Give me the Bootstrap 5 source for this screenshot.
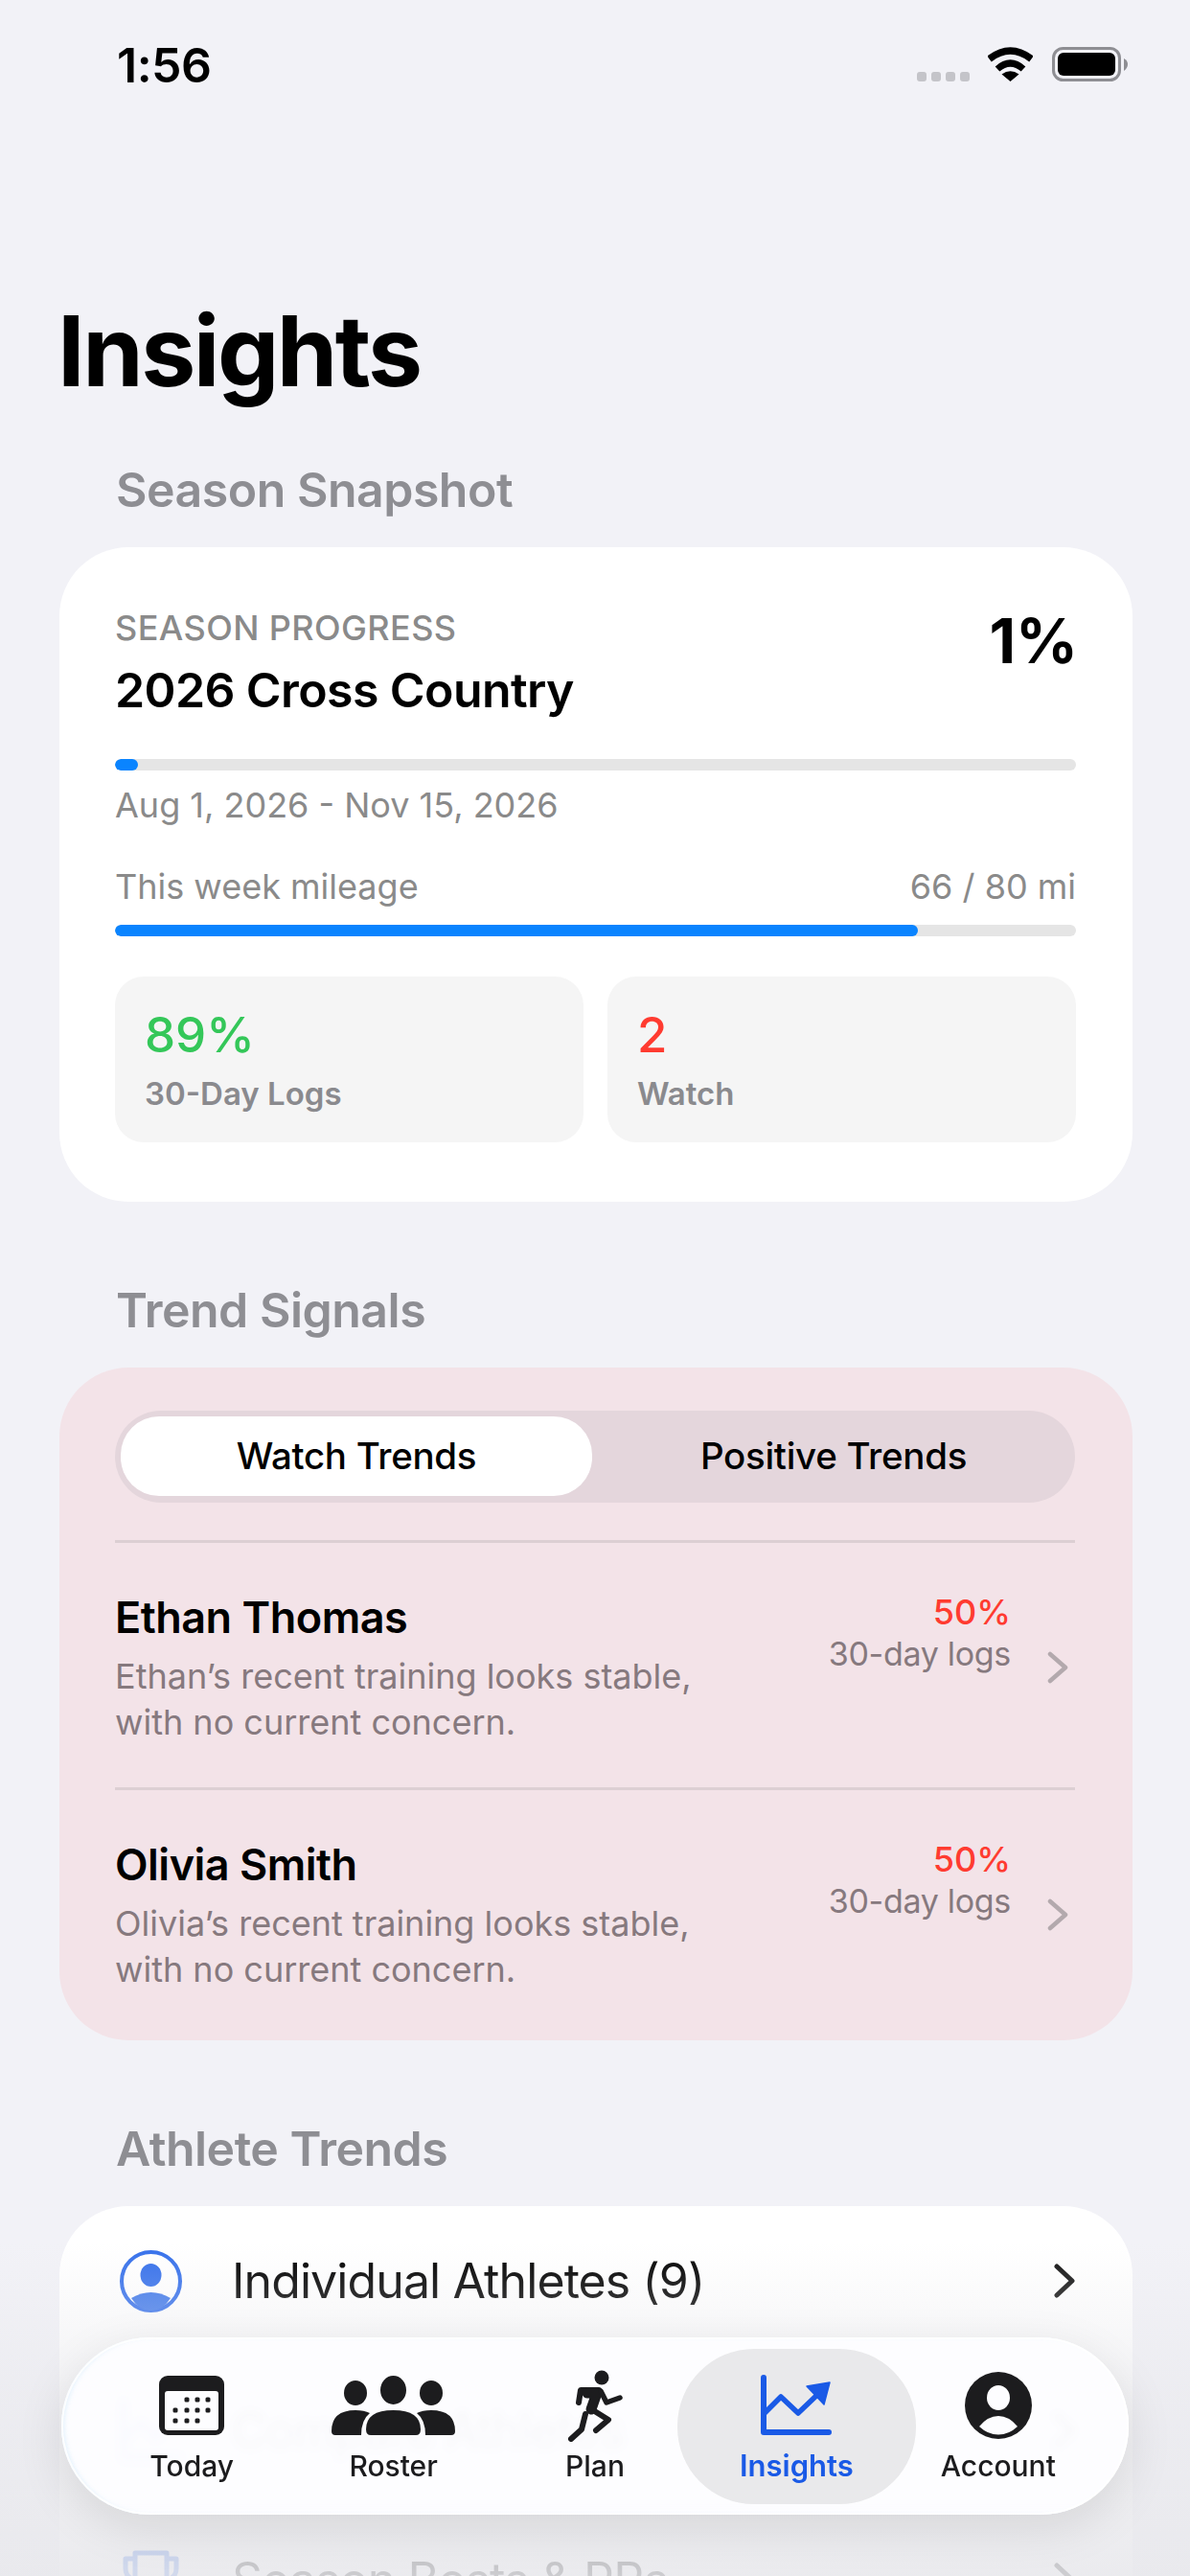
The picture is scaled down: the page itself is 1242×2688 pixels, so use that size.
<!DOCTYPE html>
<html lang="en">
  <head>
    <meta charset="UTF-8" />
    <meta name="viewport" content="width=device-width, initial-scale=1.0" />
    <title>Insights</title>
    <link
      href="https://cdn.jsdelivr.net/npm/bootstrap@5.3.0/dist/css/bootstrap.min.css"
      rel="stylesheet"
    />
    <style>
      html, body { height: 2688px; overflow: hidden; }
      body {
        background: #f2f2f7;
        font-family: Inter, "Liberation Sans", sans-serif;
        color: #000;
        position: relative;
      }
      .status-row { height: 100px; padding: 36px 64px 0 122px; }
      .status-time { font-size: 50px; line-height: 64px; font-weight: 600; letter-spacing: -.5px; }
      .status-icons { padding-top: 13px; }
      .signal-dots { gap: 5px; margin: 26px 19px 0 0; }
      .signal-dots i { display: block; width: 10px; height: 10px; border-radius: 3px; background: #c4c4c9; }
      .wifi-icon { margin-right: 20px; }
      .page-title { font-size: 102px; line-height: 120px; font-weight: 700; letter-spacing: -2.5px; margin: 206px 0 55px 60px; }
      .section-title { font-size: 50px; line-height: 60px; font-weight: 600; color: #8e8e93; margin: 0 0 30px 121px; letter-spacing: -.5px; }
      .sheet { margin: 0 60px 0 62px; border: 0; border-radius: 72px; background: #fff; }
      .sheet-season { padding: 62px 59px 62px 58px; margin-bottom: 83px; }
      .eyebrow { font-size: 36px; line-height: 44px; font-weight: 500; color: #8a8a8a; letter-spacing: .4px; }
      .season-name { font-size: 50px; line-height: 60px; font-weight: 600; margin-top: 13px; letter-spacing: -.6px; }
      .season-pct { font-size: 64px; line-height: 72px; font-weight: 700; margin-right: -2px; }
      .progress.thin-bar { height: 12px; background: #e5e5e5; border-radius: 6px; }
      .thin-bar .progress-bar { background: #0a84ff; border-radius: 6px; }
      .season-bar { margin-top: 42px; }
      .muted-line { font-size: 36px; line-height: 48px; color: #8a8a8a; }
      .date-line { margin-top: 12px; }
      .week-line { margin-top: 37px; }
      .week-bar { margin-top: 16px; }
      .tile-row { gap: 25px; margin-top: 42px; }
      .stat-tile { flex: 1 1 0; height: 173px; background: #f5f5f5; border-radius: 30px; padding: 31px 31px 0; }
      .stat-value { font-size: 51px; line-height: 60px; font-weight: 500; }
      .stat-label { font-size: 33px; line-height: 44px; font-weight: 600; color: #8a8a8e; margin-top: 9px; }
      .text-good { color: #34c759; }
      .text-bad { color: #ff3b30; }

      .sheet-trends { background: #f3e3e8; padding-top: 45px; margin-bottom: 83px; height: 702px; }
      .seg-track { margin: 0 60px 0 58px; height: 96px; padding: 6px 6px 7px; background: #e4d6dc; border-radius: 48px; }
      .seg-track .nav-item:first-child { padding-right: 6px; }
      .seg-track .nav-link { height: 83px; line-height: 83px; padding: 0; font-size: 38.5px; font-weight: 500; color: #000; border-radius: 40px; letter-spacing: -.3px; }
      .seg-track .nav-link.active { background: #fff; color: #000; }
      .trend-list { margin-top: 40px; border-top: 1px solid #f7ebee; }
      .trend-list .list-group-item { background: transparent; border: 0; padding: 0 60px 0 58px; color: #000; }
      .trend-row { height: 259px; border-top: 3px solid #dccfd3; margin-top: -1px; padding: 50px 7px 0 0; }
      .trend-name { font-size: 45px; line-height: 56px; font-weight: 600; letter-spacing: -.5px; }
      .trend-note { font-size: 36px; line-height: 48px; color: #86797e; margin-top: 9px; }
      .trend-num { font-size: 36px; line-height: 44px; font-weight: 500; }
      .trend-sub { font-size: 34px; line-height: 44px; color: #86797e; letter-spacing: -.3px; }
      .trend-chev { width: 22px; height: 34px; margin: 63px 0 0 38px; flex: none; }

      .sheet-links { padding: 0 60px 0 63px; }
      .link-row { height: 156px; gap: 52px; font-size: 50px; color: #000; letter-spacing: -.9px; }
      .lead-icon { width: 65px; height: 65px; flex: none; }
      .row-chev { width: 22px; height: 36px; margin-left: auto; flex: none; }

      .bottom-fade {
        position: absolute; left: 0; right: 0; bottom: 0; height: 348px;
        background: linear-gradient(to bottom, rgba(232,232,236,0), rgba(232,232,236,.55) 45%, rgba(232,232,236,.88) 100%);
      }
      .tab-glass {
        position: absolute; left: 64px; top: 2439px; width: 1114px; height: 185px;
        border-radius: 92px; padding: 12px 31px;
        background: rgba(253,253,255,.95);
        -webkit-backdrop-filter: blur(4px);
        backdrop-filter: blur(4px);
        box-shadow: 0 14px 50px rgba(0,0,0,.1), inset 0 0 0 2px rgba(255,255,255,.9), inset 4px 0 5px -1px rgba(205,232,250,.6);
      }
      .tab-glass .nav-link {
        flex: 1 1 0; height: 162px; padding: 0; color: #1c1c1e;
        font-size: 30px; line-height: 40px; font-weight: 500;
        position: relative; text-align: center;
      }
      .tab-glass .nav-link.active { color: #1a5ae6; font-size: 31px; font-weight: 600; }
      .tab-glass .nav-link.active::before {
        content: ""; position: absolute; top: 0; bottom: 0; left: -19px; right: -19px;
        background: #e9e9eb; border-radius: 80px; z-index: -1;
      }
      .tab-art { height: 96px; display: flex; align-items: center; justify-content: center; padding-top: 22px; }
      .tab-word { display: block; margin-top: 6px; }
    </style>
  </head>
  <body>
    <!-- Status bar -->
    <div class="status-row d-flex justify-content-between align-items-start">
      <div class="status-time">1:56</div>
      <div class="status-icons d-flex align-items-start">
        <div class="signal-dots d-flex"><i></i><i></i><i></i><i></i></div>
        <svg class="wifi-icon" width="47" height="36" viewBox="0 0 47 36" aria-hidden="true">
          <path d="M1.5 12.5Q23.500 -4.500 45.500 12.500" fill="none" stroke="#000" stroke-width="7.5" />
          <path d="M10 23Q23.500 11 37 23" fill="none" stroke="#000" stroke-width="7" />
          <path d="M23.5 36L14.5 28.5Q23.5 22 32.5 28.5Z" />
        </svg>
        <svg width="80" height="36" viewBox="0 0 80 36" aria-hidden="true">
          <rect x="1.5" y="1.5" width="69" height="33" rx="10" fill="none" stroke="#8e8e93" stroke-width="3" />
          <rect x="6" y="6" width="60" height="24" rx="6" />
          <path d="M75 12Q79 14 79 18Q79 22 75 25Z" fill="#8e8e93" />
        </svg>
      </div>
    </div>

    <h1 class="page-title">Insights</h1>

    <!-- Season -->
    <h2 class="section-title">Season Snapshot</h2>
    <div class="card sheet sheet-season">
      <div class="d-flex justify-content-between align-items-start">
        <div>
          <div class="eyebrow">SEASON PROGRESS</div>
          <div class="season-name">2026 Cross Country</div>
        </div>
        <div class="season-pct">1%</div>
      </div>
      <div class="progress thin-bar season-bar">
        <div class="progress-bar" style="width: 2.4%"></div>
      </div>
      <div class="muted-line date-line">Aug 1, 2026 - Nov 15, 2026</div>
      <div class="d-flex justify-content-between muted-line week-line">
        <span>This week mileage</span><span>66 / 80 mi</span>
      </div>
      <div class="progress thin-bar week-bar">
        <div class="progress-bar" style="width: 83.5%"></div>
      </div>
      <div class="d-flex tile-row">
        <div class="stat-tile">
          <div class="stat-value text-good">89%</div>
          <div class="stat-label">30-Day Logs</div>
        </div>
        <div class="stat-tile">
          <div class="stat-value text-bad">2</div>
          <div class="stat-label">Watch</div>
        </div>
      </div>
    </div>

    <!-- Trends -->
    <h2 class="section-title">Trend Signals</h2>
    <div class="card sheet sheet-trends">
      <ul class="nav nav-pills nav-justified seg-track">
        <li class="nav-item"><a class="nav-link active" href="#">Watch Trends</a></li>
        <li class="nav-item"><a class="nav-link" href="#">Positive Trends</a></li>
      </ul>
      <div class="list-group list-group-flush trend-list">
        <div class="list-group-item">
          <div class="trend-row d-flex">
            <div class="flex-grow-1">
              <div class="trend-name">Ethan Thomas</div>
              <div class="trend-note">Ethan’s recent training looks stable,<br />with no current concern.</div>
            </div>
            <div class="text-end">
              <div class="trend-num text-bad">50%</div>
              <div class="trend-sub">30-day logs</div>
            </div>
            <svg class="trend-chev" viewBox="0 0 22 34" aria-hidden="true"><path d="M3 3L19 17L3 31" fill="none" stroke="#b3a9ad" stroke-width="4.5" stroke-linecap="round" stroke-linejoin="round" /></svg>
          </div>
        </div>
        <div class="list-group-item">
          <div class="trend-row d-flex">
            <div class="flex-grow-1">
              <div class="trend-name">Olivia Smith</div>
              <div class="trend-note">Olivia’s recent training looks stable,<br />with no current concern.</div>
            </div>
            <div class="text-end">
              <div class="trend-num text-bad">50%</div>
              <div class="trend-sub">30-day logs</div>
            </div>
            <svg class="trend-chev" viewBox="0 0 22 34" aria-hidden="true"><path d="M3 3L19 17L3 31" fill="none" stroke="#b3a9ad" stroke-width="4.5" stroke-linecap="round" stroke-linejoin="round" /></svg>
          </div>
        </div>
      </div>
    </div>

    <!-- Athlete links, these run under the tab bar -->
    <h2 class="section-title">Athlete Trends</h2>
    <div class="card sheet sheet-links">
      <div class="link-row d-flex align-items-center">
        <svg class="lead-icon" viewBox="0 0 65 65" aria-hidden="true">
          <circle cx="32.5" cy="32.5" r="30.5" fill="none" stroke="#3570eb" stroke-width="4" />
          <ellipse cx="32.5" cy="26" rx="11" ry="12" fill="#3570eb" />
          <path d="M12 50Q22 44 32.5 44Q43 44 53 50Q45 63 32.5 63Q20 63 12 50Z" fill="#4079ea" />
        </svg>
        <span>Individual Athletes (9)</span>
        <svg class="row-chev" viewBox="0 0 22 36" aria-hidden="true"><path d="M3 3L19 18L3 33" fill="none" stroke="#111" stroke-width="5" stroke-linecap="round" stroke-linejoin="round" /></svg>
      </div>
      <div class="link-row d-flex align-items-center">
        <svg class="lead-icon" viewBox="0 0 65 65" aria-hidden="true">
          <path d="M4 2V60H62M4 42L22 24L38 40L58 16" fill="none" stroke="#3570eb" stroke-width="5" stroke-linecap="round" stroke-linejoin="round" />
        </svg>
        <span>Compare Athletes</span>
        <svg class="row-chev" viewBox="0 0 22 36" aria-hidden="true"><path d="M3 3L19 18L3 33" fill="none" stroke="#111" stroke-width="5" stroke-linecap="round" stroke-linejoin="round" /></svg>
      </div>
      <div class="link-row d-flex align-items-center">
        <svg class="lead-icon" viewBox="0 0 65 65" aria-hidden="true">
          <path d="M16 4H49V28Q49 44 32.5 44Q16 44 16 28ZM16 10H6V20Q6 30 16 32M49 10H59V20Q59 30 49 32M32.5 44V56M20 60H45" fill="none" stroke="#3570eb" stroke-width="5" stroke-linecap="round" stroke-linejoin="round" />
        </svg>
        <span>Season Bests &amp; PRs</span>
        <svg class="row-chev" viewBox="0 0 22 36" aria-hidden="true"><path d="M3 3L19 18L3 33" fill="none" stroke="#111" stroke-width="5" stroke-linecap="round" stroke-linejoin="round" /></svg>
      </div>
    </div>

    <div class="bottom-fade"></div>

    <!-- Tab bar -->
    <nav class="nav tab-glass">
      <a class="nav-link" href="#">
        <span class="tab-art">
          <svg width="68" height="62" viewBox="0 0 68 62" aria-hidden="true">
            <rect width="68" height="62" rx="9" fill="#1c1c1e" />
            <rect x="6" y="16" width="56" height="41" rx="3" fill="#fdfdff" />
            <g fill="#1c1c1e">
              <rect x="26.5" y="22.5" width="5" height="5" rx="1.5" /><rect x="37.5" y="22.5" width="5" height="5" rx="1.5" /><rect x="48.5" y="22.5" width="5" height="5" rx="1.5" />
              <rect x="14.5" y="33.5" width="5" height="5" rx="1.5" /><rect x="26.5" y="33.5" width="5" height="5" rx="1.5" /><rect x="37.5" y="33.5" width="5" height="5" rx="1.5" /><rect x="48.5" y="33.5" width="5" height="5" rx="1.5" />
              <rect x="14.5" y="44.5" width="5" height="5" rx="1.5" /><rect x="26.5" y="44.5" width="5" height="5" rx="1.5" /><rect x="37.5" y="44.5" width="5" height="5" rx="1.5" />
            </g>
          </svg>
        </span>
        <span class="tab-word">Today</span>
      </a>
      <a class="nav-link" href="#">
        <span class="tab-art">
          <svg width="129" height="62" viewBox="0 0 129 62" aria-hidden="true">
            <g fill="#1c1c1e">
              <ellipse cx="25" cy="18" rx="12" ry="13" /><ellipse cx="64.5" cy="15" rx="13.5" ry="15" /><ellipse cx="104" cy="18" rx="12" ry="13" />
              <path d="M36 56Q36 36 64.5 36Q93 36 93 56Q93 62 88 62H41Q36 62 36 56Z" />
              <path d="M0 58Q0 36 25 36Q34 36 40 39Q31 46 31 62H4Q0 62 0 58Z" />
              <path d="M129 58Q129 36 104 36Q95 36 89 39Q98 46 98 62H125Q129 62 129 58Z" />
            </g>
          </svg>
        </span>
        <span class="tab-word">Roster</span>
      </a>
      <a class="nav-link" href="#">
        <span class="tab-art">
          <svg width="58" height="75" viewBox="0 0 58 75" aria-hidden="true">
            <ellipse cx="36" cy="8" rx="7.5" ry="7.5" fill="#1c1c1e" />
            <g fill="none" stroke="#1c1c1e" stroke-linecap="round" stroke-linejoin="round">
              <path d="M12 34L14 21H33L27 42L43 52L30 63" stroke-width="6" />
              <path d="M21 24H31L25 41" stroke-width="11" />
              <path d="M35 22L41 34L55 29" stroke-width="5.5" />
              <path d="M19 46L15 62L4 72" stroke-width="6" />
            </g>
          </svg>
        </span>
        <span class="tab-word">Plan</span>
      </a>
      <a class="nav-link active" href="#">
        <span class="tab-art">
          <svg width="74" height="64" viewBox="0 0 74 64" aria-hidden="true">
            <path d="M3 3V60H71" fill="none" stroke="#1a5ae6" stroke-width="6" stroke-linecap="round" stroke-linejoin="round" />
            <path d="M3 41L21 23L39 40L60 20" fill="none" stroke="#1a5ae6" stroke-width="5.5" stroke-linejoin="round" />
            <path d="M48 12L72 8L66 31Z" fill="#1a5ae6" stroke="#1a5ae6" stroke-width="1.5" stroke-linejoin="round" />
          </svg>
        </span>
        <span class="tab-word">Insights</span>
      </a>
      <a class="nav-link" href="#">
        <span class="tab-art">
          <svg width="70" height="70" viewBox="0 0 70 70" aria-hidden="true">
            <circle cx="35" cy="35" r="35" fill="#1c1c1e" />
            <ellipse cx="35" cy="27" rx="12" ry="13" fill="#fdfdff" />
            <path d="M15 57Q24 46 35 46Q46 46 55 57Q46 65.5 35 65.5Q24 65.5 15 57Z" fill="#fdfdff" />
          </svg>
        </span>
        <span class="tab-word">Account</span>
      </a>
    </nav>

    <script src="https://cdn.jsdelivr.net/npm/bootstrap@5.3.0/dist/js/bootstrap.bundle.min.js"></script>
  </body>
</html>
